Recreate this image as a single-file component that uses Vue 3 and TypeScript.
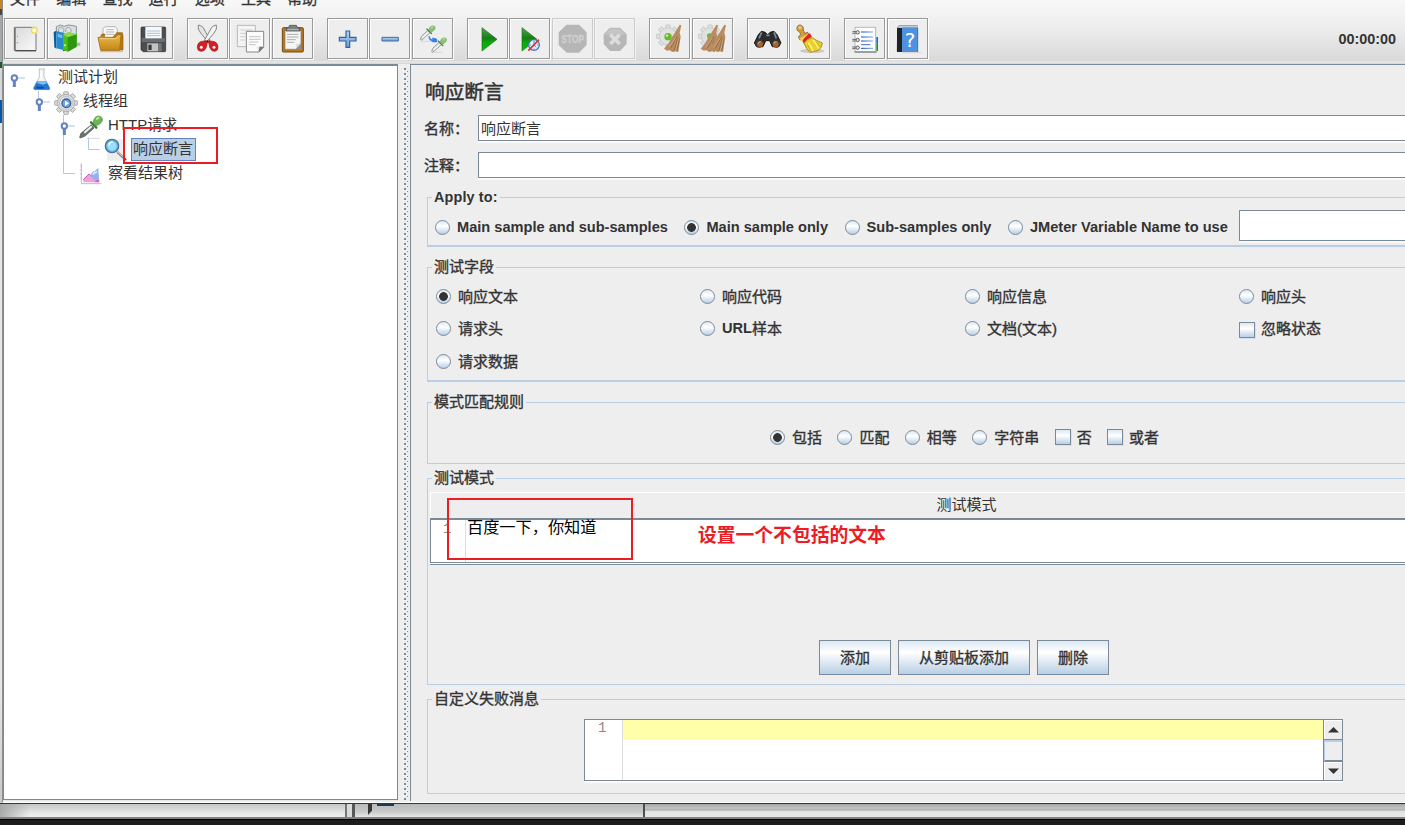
<script setup lang="ts">
interface ToolButton { icon: string; disabled?: boolean }
interface TreeNode { label: string; depth: number; icon: string; handle: boolean; selected?: boolean; latin?: string }
interface Choice { label: string; latin?: string; kind?: 'radio' | 'check'; on?: boolean }

const menus: string[] = ['文件', '编辑', '查找', '运行', '选项', '工具', '帮助']

const toolGroups: ToolButton[][] = [
  [{ icon: 'new' }, { icon: 'templates' }, { icon: 'open' }, { icon: 'save' }],
  [{ icon: 'cut' }, { icon: 'copy' }, { icon: 'paste' }],
  [{ icon: 'plus' }, { icon: 'minus' }, { icon: 'toggle' }],
  [{ icon: 'start' }, { icon: 'startNoTimers' }, { icon: 'stop', disabled: true }, { icon: 'shutdown', disabled: true }],
  [{ icon: 'clear' }, { icon: 'clearAll' }],
  [{ icon: 'search' }, { icon: 'searchReset' }],
  [{ icon: 'functions' }, { icon: 'help' }],
]

const gear = (cx: number, cy: number, r: number, fill: string, stroke: string): string => {
  let teeth = ''
  for (let a = 0; a < 360; a += 45) {
    teeth += `<rect x="${cx - r * 0.2}" y="${cy - r}" width="${r * 0.4}" height="${r * 0.5}" rx="2" fill="${fill}" stroke="${stroke}" stroke-width="2.4" transform="rotate(${a} ${cx} ${cy})"/>`
  }
  return `${teeth}<circle cx="${cx}" cy="${cy}" r="${r * 0.76}" fill="${fill}" stroke="${stroke}" stroke-width="2"/>`
}

const sweeper = (dx: number): string =>
  `<path d="M${92 + dx} 20l5 2-5 22 3 12-7 46-10-2-8 2-8-5-8 1-9-6q16-16 24-36l4-4z" fill="#b98d62"/><path d="M${84 + dx} 56l-20 36M${87 + dx} 60l-12 40M${91 + dx} 60l-7 40" stroke="#8c6540" stroke-width="2.5" fill="none"/><path d="M${80 + dx} 60l-20 28M${89 + dx} 60l-9 38" stroke="#d9b48a" stroke-width="2" fill="none"/>`

const dropper = (x: number, y: number, s: number): string =>
  `<g transform="translate(${x} ${y}) scale(${s})"><path d="M3 62L8 48 36 22l10 10L20 56 6 66z" fill="#dfe4e1" stroke="#8f9794" stroke-width="4"/><path d="M12 56L36 32" stroke="#fff" stroke-width="4"/><path d="M32 16l20 20" stroke="#4f8745" stroke-width="6" stroke-linecap="round"/><path d="M40 20Q44 4 56 2q16 0 12 14-6 10-18 14z" fill="#8cc274" stroke="#6aa259" stroke-width="2"/><path d="M50 12q4-6 10-5" stroke="#cfeabf" stroke-width="4" fill="none"/></g>`

const icons: Record<string, string> = {
  new: `<path d="M31 28h65v70H31z" fill="url(#paper)" stroke="#777" stroke-width="3"/><path d="M34 98h62" stroke="#4d4d4d" stroke-width="4"/><path d="M33 30v66" stroke="#666" stroke-width="4"/><circle cx="40" cy="55" r="1.8" fill="#888"/><circle cx="40" cy="74" r="1.8" fill="#888"/><circle cx="91" cy="37" r="11" fill="#fff29a" opacity=".7"/><circle cx="91" cy="37" r="8.5" fill="#fffde6" stroke="#f0da4e" stroke-width="4"/>`,
  templates: `<path d="M28 44V26l12-5 12 4 12-4 24 4v30z" fill="#dce0e2" stroke="#8b9296" stroke-width="3"/><path d="M34 42q0-18 10-14t5 16M56 42q0-18 10-14t5 16" fill="none" stroke="#9aa" stroke-width="3"/><path d="M20 42l8-4v54l-6-4z" fill="#0d5b93"/><path d="M28 39l24 6v52l-24-6z" fill="#2589cb"/><path d="M32 47l14 4v10l-14-4z" fill="#6fb9e8"/><path d="M80 74h20v9H82z" fill="#adb2ad"/><path d="M48 58l14-6v45l-14 3z" fill="#1f7c0c"/><path d="M48 50l16-7 25 6v37l-27 15-14-6z" fill="#4ebd18"/><path d="M62 58l27-9v37l-27 15z" fill="#2f970d"/><path d="M48 50l16-7 25 6-27 9z" fill="#89df4a"/><circle cx="54" cy="82" r="3" fill="#d9f7b0"/>`,
  open: `<path d="M42 58V31l8-5h29l6 8v26z" fill="#fafafa" stroke="#aaa" stroke-width="2.5"/><path d="M52 35h22M50 42h26M50 49h26" stroke="#b5b5b5" stroke-width="3"/><path d="M34 56l5-8h8v8M82 44h18l2 10v42H36" fill="#b77a12" stroke="#945e0a" stroke-width="2"/><path d="M27 58h52l8-8h9l-4 47H35z" fill="url(#folder)" stroke="#a56d0d" stroke-width="2.5"/><path d="M32 62h48l8-8" fill="none" stroke="#f9d98a" stroke-width="2.5"/><path d="M34 101h68" stroke="#bbb" stroke-width="3"/>`,
  save: `<path d="M27 30q0-3 3-3h68q3 0 3 3v68q0 3-3 3H33l-6-6z" fill="#4b4d50" stroke="#292b2d" stroke-width="2"/><path d="M29 60h70v12H29z" fill="#6a6c70"/><path d="M40 27h49v34H40z" fill="#f6f9fc"/><path d="M45 39h39M45 46h39M45 53h39" stroke="#9db9d6" stroke-width="2.6"/><path d="M46 76h33v24H46z" fill="#c2c4c4"/><path d="M79 76h10v24H79z" fill="#77797c"/><path d="M49 80h10v16H49z" fill="#3a3b3d"/>`,
  cut: `<path d="M34 21q-4 12 7 24l23 28 5-7-21-38q-6-6-14-7z" fill="#e4e6e4" stroke="#858885" stroke-width="3"/><path d="M88 21q4 12-7 24L58 73l-5-7 21-38q6-6 14-7z" fill="#f2f3f2" stroke="#858885" stroke-width="3"/><path d="M57 68l-16 3q-10 4-10 16 0 12 10 13 17 0 19-23l3-4 3 4q2 23 18 23 10-3 9-14-2-13-11-15l-17-3" fill="#d41f25" stroke="#a50d14" stroke-width="2"/><circle cx="43" cy="88" r="4.500" fill="#eee"/><circle cx="81" cy="88" r="4.500" fill="#eee"/><circle cx="61" cy="70" r="3" fill="#651014"/>`,
  copy: `<path d="M25 22h54v64H25z" fill="#f4f4f4" stroke="#b9b9b9" stroke-width="3"/><path d="M34 36h36M34 46h20M34 56h14M34 66h14" stroke="#ccc" stroke-width="3"/><path d="M52 40h52v46L90 102H52z" fill="#fbfbfb" stroke="#858885" stroke-width="3"/><path d="M60 56h35M60 64h35M60 72h28M60 80h20" stroke="#c3c5c3" stroke-width="3"/><path d="M104 87H90v15z" fill="#777" stroke="#777" stroke-width="2"/><path d="M82 88l10-4-3 15z" fill="#e4e4e4"/>`,
  paste: `<rect x="31" y="29" width="63" height="73" rx="3" fill="#b9771d" stroke="#77480e" stroke-width="3"/><path d="M39 37h48v57H39z" fill="#f5f5f5" stroke="#777" stroke-width="2"/><path d="M45 49h34M45 57h34M45 65h26M45 73h22" stroke="#acacac" stroke-width="3"/><path d="M87 76v18H70z" fill="#8d8f8d"/><path d="M72 78l13-2-13 16z" fill="#ddd"/><path d="M42 39v-7l8-4 3-6h20l3 6 8 4v7z" fill="#7d8080" stroke="#4e5050" stroke-width="2.4"/><path d="M46 35h34" stroke="#bbbebe" stroke-width="3"/>`,
  plus: `<path d="M57 39h11v19h19v11H68v19H57V69H37V58h20z" fill="url(#blue)" stroke="#2f63a5" stroke-width="3.6"/>`,
  minus: `<path d="M39 58h49v11H39z" fill="url(#blue)" stroke="#3b6dab" stroke-width="3"/>`,
  toggle: `<path d="M26 70h40M58 103h32" stroke="#d7d7d7" stroke-width="3"/>${dropper(23, 22, 0.68)}${dropper(57, 58, 0.68)}<path d="M51 54q4 14 14 10l-4-4 13 3v9l-13-1 3-3q-13 3-13-14z" fill="#2d83ef" stroke="#1e71dc" stroke-width="2"/>`,
  start: `<path d="M45 29L90 64 45 99z" fill="url(#play)" stroke="#1b761b" stroke-width="2"/>`,
  startNoTimers: `<path d="M39 29L84 64 39 99z" fill="url(#play)" stroke="#1b761b" stroke-width="2"/><circle cx="75" cy="81" r="16" fill="#e8f1fa" stroke="#4a78b4" stroke-width="4"/><path d="M75 68v4M75 91v4M62 81h4M84 81h4M75 81V71M75 81l7 7" stroke="#4a78b4" stroke-width="2.5"/><path d="M58 98l32-33" stroke="#e32f35" stroke-width="5"/>`,
  stop: `<path d="M44 20h37l23 23v38l-23 23H44L20 81V43z" fill="#b6b6b6"/><text x="62" y="75" text-anchor="middle" font-family="Liberation Sans" font-weight="700" font-size="33" textLength="68" lengthAdjust="spacingAndGlyphs" fill="#cfcfcf" stroke="#cfcfcf" stroke-width="1">STOP</text>`,
  shutdown: `<path d="M48 29h30l20 20v29L78 99H48L29 78V49z" fill="#b7b7b7"/><path d="M32 50L49 32h28l18 18" fill="#c5c5c5"/><path d="M49 50l28 28M77 50L49 78" stroke="#dcdcdc" stroke-width="11"/><circle cx="63" cy="64" r="8" fill="#dcdcdc"/>`,
  clear: `${gear(57, 55, 34, '#e0e2e2', '#bfc2c2')}<circle cx="57" cy="56" r="11" fill="#65ba2b"/><circle cx="54" cy="53" r="4" fill="#b8e98c"/>${sweeper(0)}`,
  clearAll: `${gear(54, 55, 34, '#e0e2e2', '#bfc2c2')}<circle cx="53" cy="54" r="8" fill="#65ba2b"/>${sweeper(-19)}${sweeper(5)}`,
  search: `<path d="M34 50l9-10 12 3 7 8 7-8 12-3 9 10 12 25-9 11H76L68 68H56l-8 18H29l-7-11z" fill="#2a2c2e" stroke="#171819" stroke-width="3"/><path d="M44 43l-8 18M81 43l7 18M58 52h10" stroke="#84898c" stroke-width="5"/><circle cx="37" cy="76" r="13" fill="#333537"/><circle cx="88" cy="76" r="13" fill="#333537"/><circle cx="39" cy="78" r="9" fill="#a7642f"/><circle cx="86" cy="78" r="9" fill="#a7642f"/><path d="M34 77q1-6 7-6M81 77q1-6 7-6" stroke="#dda573" stroke-width="3" fill="none"/>`,
  searchReset: `<ellipse cx="70" cy="99" rx="37" ry="6" fill="#c9c9c9"/><path d="M24 34q-2-13 10-13 11 3 9 15l4 10 9-3 5 9-28 14-5-9 7-8-4-8q-6-1-7-7z" fill="#cf9c42" stroke="#8c6220" stroke-width="2.4"/><circle cx="33" cy="29" r="5" fill="#f0c878"/><path d="M31 61l26-12 9 15-24 11z" fill="#f0d04e"/><path d="M41 69q4-11 22-23l6 11q-15 4-24 20z" fill="#df1e26"/><path d="M45 75q8-11 25-16 12 9 30 16 0 12-11 22l-26 6q-12-9-18-28z" fill="#ead02c" stroke="#a58713" stroke-width="2.6"/><path d="M58 74q10 13 14 26M72 66q10 10 17 26" stroke="#fff07c" stroke-width="5" fill="none"/><path d="M55 80l12 20M80 70l14 16" stroke="#b89818" stroke-width="2" fill="none"/>`,
  functions: `<path d="M33 28h62v74H33z" fill="#fdfdfd" stroke="#a5a7a9" stroke-width="2.4"/><path d="M97 57h5v20h-5z" fill="#1e62d8"/><path d="M97 77h5v22h-5z" fill="#1b8f31"/><path d="M32 102h66" stroke="#66696b" stroke-width="3"/><path d="M51 42h36M51 57h36M51 69h36M51 91h36" stroke="url(#ink)" stroke-width="3"/><path d="M51 80h28" stroke="#1c52c9" stroke-width="2.5"/><g fill="#eee" stroke="#555" stroke-width="3"><circle cx="41" cy="43" r="5"/><circle cx="41" cy="66" r="5"/><circle cx="41" cy="89" r="5"/></g><path d="M25 41h12M25 64h12M25 87h12M25 46h10M25 69h10M25 92h10" stroke="#666" stroke-width="3"/>`,
  help: `<path d="M31 28l6-7h55v8l-5 73H33l-4-2z" fill="#8f979e"/><path d="M37 23h54v7H34z" fill="#c5ccd4"/><path d="M30 30h15v72H30z" fill="#202326"/><path d="M45 28h47v74H45z" fill="#4e91df"/><path d="M92 30v72" stroke="#3971b7" stroke-width="3"/><text x="69" y="87" text-anchor="middle" font-family="DejaVu Sans" font-size="60" fill="#fff">?</text><path d="M46 104h58" stroke="#ccc" stroke-width="2"/>`,
}

const treeIcons: Record<string, string> = {
  flask: `<path d="M29 6h18M31 6v24L14 62q-2 6 4 6h41q5 0 3-6L45 30V6" fill="#f2f4f6" stroke="#b8bdc2" stroke-width="2.6"/><path d="M24 43h28l10 19q2 6-3 6H18q-6 0-4-6z" fill="#2377d2"/><path d="M26 43h25l3 6-12 4-18-5z" fill="#7ec0f4"/><path d="M36 10v28" stroke="#fff" stroke-width="4"/><path d="M22 62h22" stroke="#0c4ca4" stroke-width="6"/>`,
  gear: `${gear(36, 36, 34, '#dcdcdc', '#9b9b9b')}<circle cx="36" cy="36" r="19" fill="#f3f3f3" stroke="#a5a5a5" stroke-width="2"/><circle cx="37" cy="37" r="15" fill="#315e9f"/><circle cx="37" cy="37" r="11" fill="#7ba5d8"/><path d="M33 29l12 8-12 8z" fill="#fff"/>`,
  dropper: `<path d="M24 70h38" stroke="#d8d8d8" stroke-width="3"/><g transform="translate(0 1)"><path d="M2 66l4-12 30-25 9 9-27 24-14 6z" fill="#6c7572" stroke="#4a524f" stroke-width="2.4"/><path d="M16 52l22-19" stroke="#eef2f0" stroke-width="6"/><path d="M36 21l16 16" stroke="#3c7b3a" stroke-width="7" stroke-linecap="round"/><path d="M42 22Q46 2 58 2q14 1 12 15-6 11-18 14z" fill="#6db457" stroke="#4b9440" stroke-width="2"/><path d="M52 13q3-6 9-5" stroke="#c5e8b4" stroke-width="5" fill="none"/></g>`,
  magnifier: `<path d="M9 4h52v64H9z" fill="#eee"/><path d="M40 42l26 24" stroke="#555" stroke-width="7"/><path d="M38 39l22 20" stroke="#ccc" stroke-width="4"/><circle cx="24" cy="24" r="20" fill="#65b7e9" stroke="#4e7196" stroke-width="4"/><circle cx="24" cy="24" r="14" fill="#9bddfa"/><path d="M14 23q2-11 12-11" stroke="#e7faff" stroke-width="5" fill="none"/>`,
  chart: `<path d="M7 4v61h60" fill="none" stroke="#b6a7bd" stroke-width="2.5"/><path d="M3 12h4M3 24h4M3 36h4M3 48h4" stroke="#b6a7bd" stroke-width="2"/><path d="M13 61V53l17-17 12 10 18-8v23z" fill="#eba1da"/><path d="M13 53l17-17 12 10" fill="none" stroke="#cf5bb6" stroke-width="3"/><path d="M35 40q4-12 13-14l10-8 2 38q-8 4-14-3-7-3-11-13z" fill="#8fb4ee"/><path d="M42 38q4-8 12-9" stroke="#d8e8ff" stroke-width="6" fill="none"/><path d="M48 59q6-8 13-5v7H45z" fill="#d964bb"/>`,
}

const tree: TreeNode[] = [
  { label: '测试计划', depth: 0, icon: 'flask', handle: true },
  { label: '线程组', depth: 1, icon: 'gear', handle: true },
  { label: '请求', latin: 'HTTP', depth: 2, icon: 'dropper', handle: true },
  { label: '响应断言', depth: 3, icon: 'magnifier', handle: false, selected: true },
  { label: '察看结果树', depth: 2, icon: 'chart', handle: false },
]

const applyTo: Choice[] = [
  { label: '', latin: 'Main sample and sub-samples' },
  { label: '', latin: 'Main sample only', on: true },
  { label: '', latin: 'Sub-samples only' },
  { label: '', latin: 'JMeter Variable Name to use' },
]

const fields: Choice[] = [
  { label: '响应文本', on: true }, { label: '响应代码' }, { label: '响应信息' }, { label: '响应头' },
  { label: '请求头' }, { label: '样本', latin: 'URL' }, { label: '文档(文本)' }, { label: '忽略状态', kind: 'check' },
  { label: '请求数据' },
]

const rules: Choice[] = [
  { label: '包括', on: true }, { label: '匹配' }, { label: '相等' }, { label: '字符串' },
  { label: '否', kind: 'check' }, { label: '或者', kind: 'check' },
]

const actions: string[] = ['添加', '从剪贴板添加', '删除']
</script>

<template>
  <div class="screen">
    <svg class="defs" width="0" height="0" aria-hidden="true">
      <defs>
        <linearGradient id="paper" x1="0" y1="0" x2="1" y2="1"><stop offset="0" stop-color="#d9d9d9" /><stop offset="1" stop-color="#fafafa" /></linearGradient>
        <linearGradient id="folder" x1="0" y1="0" x2="0" y2="1"><stop offset="0" stop-color="#e9b94d" /><stop offset="1" stop-color="#c48618" /></linearGradient>
        <linearGradient id="blue" x1="0" y1="0" x2="0" y2="1"><stop offset="0" stop-color="#b7d0ec" /><stop offset="1" stop-color="#6e9dd0" /></linearGradient>
        <linearGradient id="play" x1="0" y1="0" x2="0" y2="1"><stop offset="0" stop-color="#51a751" /><stop offset=".45" stop-color="#157b15" /><stop offset=".6" stop-color="#0aa50a" /><stop offset="1" stop-color="#12b812" /></linearGradient>
        <linearGradient id="ink" gradientUnits="userSpaceOnUse" x1="50" y1="0" x2="88" y2="0"><stop offset="0" stop-color="#0c3fc0" /><stop offset="1" stop-color="#7fb2ef" /></linearGradient>
      </defs>
    </svg>
    <div class="upper">
      <div class="edge"></div>
      <main class="window">
        <header class="top">
          <nav class="menu"><span v-for="m in menus" :key="m">{{ m }}</span></nav>
          <div class="toolbar">
            <div v-for="(group, g) in toolGroups" :key="g" class="tool-group">
              <button v-for="t in group" :key="t.icon" class="tool" :class="{ off: t.disabled }">
                <svg viewBox="0 0 123 123" v-html="icons[t.icon]"></svg>
              </button>
            </div>
            <span class="timer">00:00:00</span>
          </div>
        </header>
        <div class="work">
          <aside class="tree">
            <svg class="links" width="120" height="130" viewBox="0 0 120 130"><path d="M34.5 25v8M59.500 49v58.500H71M84.500 71.500v12H95.500" /></svg>
            <div v-for="n in tree" :key="n.label" class="node" :class="'d' + n.depth">
              <svg class="handle" viewBox="0 0 75 72"><g v-if="n.handle"><path d="M40 39h23" stroke="#a9c3df" stroke-width="3" /><path d="M31 45v21" stroke="#6382bf" stroke-width="9" /><circle cx="31" cy="39" r="8" fill="#fff" stroke="#6382bf" stroke-width="6" /></g></svg>
              <svg class="node-icon" viewBox="0 0 72 72" v-html="treeIcons[n.icon]"></svg>
              <span class="node-label" :class="{ selected: n.selected }"><i v-if="n.latin">{{ n.latin }}</i>{{ n.label }}</span>
            </div>
            <div class="mark tree-mark"></div>
          </aside>
          <div class="divider"><svg width="6" height="732"><defs><pattern id="bumps" width="6" height="5" patternUnits="userSpaceOnUse"><rect width="2" height="2" x="1" y="0" fill="#7a8a99" /><rect width="1" height="1" x="4" y="3" fill="#7a8a99" /><rect width="1" height="1" x="0" y="2" fill="#fff" /><rect width="1" height="1" x="3" y="2" fill="#fff" /></pattern></defs><rect width="6" height="732" fill="url(#bumps)" /></svg></div>
          <section class="panel">
            <h1>响应断言</h1>
            <div class="line"><label>名称：</label><div class="input">响应断言</div></div>
            <div class="line second"><label>注释：</label><div class="input"></div></div>

            <div class="group apply">
              <div class="legend latin">Apply to:</div>
              <div class="row">
                <span v-for="c in applyTo" :key="c.latin" class="choice"><b class="radio" :class="{ on: c.on }"></b><em>{{ c.latin }}</em></span>
                <div class="input variable"></div>
              </div>
            </div>

            <div class="group fields">
              <div class="legend">测试字段</div>
              <div class="grid">
                <span v-for="c in fields" :key="c.label" class="choice"><b :class="[c.kind || 'radio', { on: c.on }]"></b><em v-if="c.latin">{{ c.latin }}</em>{{ c.label }}</span>
              </div>
            </div>

            <div class="group rules">
              <div class="legend">模式匹配规则</div>
              <div class="row">
                <span v-for="c in rules" :key="c.label" class="choice"><b :class="[c.kind || 'radio', { on: c.on }]"></b>{{ c.label }}</span>
              </div>
            </div>

            <div class="group patterns">
              <div class="legend">测试模式</div>
              <div class="table">
                <div class="th">测试模式</div>
                <div class="cell"><span class="gutter">1</span><span class="value">百度一下，你知道</span></div>
                <div class="mark cell-mark"></div>
                <div class="note">设置一个不包括的文本</div>
              </div>
              <div class="actions"><button v-for="a in actions" :key="a">{{ a }}</button></div>
            </div>

            <div class="group message">
              <div class="legend">自定义失败消息</div>
              <div class="editor">
                <span class="gutter">1</span>
                <div class="code"><div class="current"></div></div>
                <div class="scroll">
                  <div class="arrow"><svg width="11" height="6"><path d="M0 5.500L5.500 0 11 5.500z" /></svg></div>
                  <div class="thumb"></div>
                  <div class="arrow"><svg width="11" height="6"><path d="M0 .5L5.500 6 11 .5z" /></svg></div>
                </div>
              </div>
            </div>
          </section>
        </div>
      </main>
    </div>
    <div class="behind">
      <div class="b-left"></div>
      <div class="b-split"></div>
      <div class="b-mid"><i></i><u></u></div>
      <div class="b-right"></div>
    </div>
    <div class="taskbar"></div>
  </div>
</template>

<style>
html, body { margin: 0; overflow: hidden; background: #1c1c1c; }
</style>

<style scoped>
* { box-sizing: border-box; }
.screen { width: 1405px; height: 825px; overflow: hidden; display: flex; flex-direction: column; font-family: "Liberation Sans", "Noto Sans CJK SC", sans-serif; font-size: 15px; color: #333; }
.defs { position: absolute; }
.upper { height: 803px; display: flex; }
.edge { width: 2px; background: linear-gradient(#c9861e 0 9px, #44484a 9px 15px, #a4a8aa 15px 62px, #1c5a28 62px 68px, #d6d8d8 68px 100px, #0b57a5 100px 123px, #e4e7e6 123px 690px, #c6c9c8); flex: none; }
.window { width: 1403px; height: 803px; border-bottom: 1px solid #fff; background: #eee; display: flex; flex-direction: column; overflow: hidden; border-left: 1px solid #8b8d8f; }
.top { height: 64px; flex: none; background: linear-gradient(#f8f8f8, #ececec 30px, #d9d9d9 61px, #f0f0f0 62px, #d8d8d8 63px); overflow: hidden; }
.menu { display: flex; gap: 16.2px; margin-left: 7px; height: 18px; }
.menu span { line-height: 18px; margin-top: -10px; height: 18px; width: 30px; -webkit-text-stroke: .3px #333; white-space: nowrap; }
.toolbar { display: flex; gap: 13.8px; padding-left: 1px; height: 42px; }
.tool-group { display: flex; gap: 1.6px; }
.tool { width: 41px; height: 41px; padding: 0; background: #eee; border: 1px solid #999; box-shadow: inset 1px 1px #fff, 1px 1px #fff; flex: none; }
.tool svg { display: block; width: 41px; height: 41px; margin: -1px; }
.tool.off { border-color: #ccc; box-shadow: inset 1px 1px #f5f5f5, 1px 1px #f2f2f2; }
.timer { margin-left: auto; margin-right: 9px; font-weight: 700; font-size: 14.400px; line-height: 42px; }
.work { display: flex; height: 738px; }
.tree { position: relative; width: 395px; height: 736px; flex: none; background: #fff; border: solid #7a8a99; border-width: 2px 1px 1px 1px; box-shadow: 0 1px #e8e8e8; }
.links { position: absolute; left: 0; top: 0; fill: none; stroke: #b0c8e0; }
.node { height: 23.8px; display: flex; align-items: center; position: relative; top: -1px; }
.d1 { padding-left: 25px; }
.d2 { padding-left: 50px; }
.d3 { padding-left: 75px; }
.handle { width: 25px; height: 24px; flex: none; }
.node-icon { width: 24px; height: 24px; flex: none; margin-top: 4px; }
.node-label { margin: 2px 0 0 3px; padding: 0 1px; border: 1px solid transparent; height: 23px; line-height: 20px; white-space: nowrap; }
.node-label i { font-style: normal; }
.node-label.selected { background: #b8cfe5; border-color: #6382bf; width: 65px; }
.mark { position: absolute; border: 2px solid #ed1c24; }
.tree-mark { left: 119px; top: 61px; width: 95px; height: 37px; }
.divider { width: 12px; flex: none; padding: 4px 0 0 5px; }
.divider svg { display: block; }
.panel { width: 996px; border: solid #7a8a99; border-width: 1px 0 0 1px; flex: none; padding-left: 15px; height: 737px; }
h1 { font-size: 19.700px; font-weight: 400; line-height: 26px; margin: 14px 0 10px -1px; height: 26px; -webkit-text-stroke: .5px #333; }
.line { display: flex; height: 25px; -webkit-text-stroke: .35px #333; }
.line.second { margin-top: 12px; }
.line label { width: 52px; line-height: 27px; margin-left: -2px; margin-right: 2px; white-space: nowrap; flex: none; }
.input { height: 26px; width: 950px; flex: none; background: #fff; border: 1px solid #7a8a99; box-shadow: 0 2px #fafafa; line-height: 25px; padding-left: 2px; -webkit-text-stroke: 0; }
.line .input { margin-left: 0; }
.group { margin-left: 1px; border: 1px solid #b8cfe5; border-right: 0; position: relative; }
.legend { width: fit-content; background: #eee; height: 20px; line-height: 20px; margin: -11px 0 0 4px; padding: 0 2px 0 2px; -webkit-text-stroke: .35px #333; white-space: nowrap; }
.legend.latin { font-weight: 700; font-size: 14.400px; -webkit-text-stroke: 0; letter-spacing: .15px; }
.choice { display: flex; align-items: center; white-space: nowrap; height: 20px; -webkit-text-stroke: .35px #333; }
.choice em { font-style: normal; font-weight: 700; font-size: 14.600px; -webkit-text-stroke: 0; }
.radio { width: 15px; height: 15px; border-radius: 50%; border: 1.400px solid #7a8a99; background: linear-gradient(#dce7f2, #fff 40%, #b8cfe5); margin: 2px 7px 0 0; flex: none; }
.radio.on { background: radial-gradient(circle, #333 0 4px, transparent 4.700px), linear-gradient(#dce7f2, #fff 40%, #b8cfe5); }
.check { width: 16px; height: 16px; border: 1px solid #7a8a99; background: linear-gradient(#dce7f2, #fff 40%, #b8cfe5); box-shadow: 1px 1px #d5e2ef; margin: 2px 6px 0 0; flex: none; }
.apply { height: 50px; margin-top: 20px; border-bottom-width: 2px; }
.apply .row { display: flex; padding: 6px 0 0 7px; height: 34px; align-items: center; }
.apply .choice { margin-right: 16.500px; }
.apply .radio { margin-top: 0; }
.variable { height: 31px; margin: 0 0 4px -5.400px; width: 300px; }
.fields { height: 115px; margin-top: 20px; border-bottom-width: 2px; }
.fields .check { margin-top: 4px; }
.grid { display: grid; grid-template-columns: 264px 265px 274px 160px; grid-auto-rows: 32.500px; padding: 8px 0 0 8px; }
.rules { height: 62px; margin-top: 20px; }
.rules .row { display: flex; padding: 14px 0 0 342px; }
.rules .choice { margin-right: 15.400px; }
.patterns { height: 207px; margin-top: 14px; }
.table { position: relative; margin: 4px 0 0 2px; height: 73px; }
.th { height: 26px; border-top: 1px solid #fff; border-left: 1px solid #fff; text-align: center; line-height: 24px; width: 1072px; }
.cell { height: 45px; margin-top: 0; border: 1px solid #7a8a99; border-top-width: 2px; background: #fff; display: flex; box-shadow: 0 1px #fff, 0 2px #7a8a99; }
.gutter { width: 35px; border-right: 1px solid #ddd; color: #8f8585; font: 14px/18px "Liberation Mono", monospace; padding-left: 12px; flex: none; }
.value { font-size: 16.200px; line-height: 15px; color: #000; padding-left: 1px; white-space: nowrap; }
.cell-mark { left: 17px; top: 6px; width: 186px; height: 62px; }
.note { position: absolute; left: 268px; top: 30px; font-size: 18.800px; line-height: 28px; font-weight: 700; color: #ed1c24; white-space: nowrap; }
.actions { display: flex; gap: 7px; padding: 75px 0 0 391px; }
.actions button { height: 35px; width: 72px; padding: 0 0 2px; font: inherit; color: #333; -webkit-text-stroke: .35px #333; border: 1px solid #7a8a99; background: linear-gradient(#dde8f3, #fff 35%, #b8cfe5); white-space: nowrap; }
.actions button:nth-child(2) { width: 132px; }
.message { height: 95px; margin-top: 14px; }
.editor { width: 759px; height: 62px; margin: 10px 0 0 156px; background: #fff; border: 1px solid #7a8a99; display: flex; box-shadow: 0 2px #fafafa; }
.editor .gutter { width: 38px; padding-left: 13px; line-height: 17px; }
.code { width: 700px; }
.current { height: 20px; background: #ffffa9; }
.scroll { flex: 1; border-left: 1px solid #7a8a99; display: flex; flex-direction: column; background: #eee; }
.arrow { height: 20px; display: flex; align-items: center; justify-content: center; border-bottom: 1px solid #7a8a99; box-shadow: inset 1px 1px #fff; flex: none; }
.arrow svg { fill: #333; }
.arrow:last-child { border-bottom: 0; height: 18px; }
.thumb { height: 22px; border: solid #b8cfe5; border-width: 2px 0 0 1px; border-bottom: 2px solid #7a8a99; }
.behind { height: 16px; flex: none; display: flex; border-top: 1px solid #333836; border-bottom: 2px solid #7e8284; background: linear-gradient(#a4a6a4, #c0c2c0 30%, #b2b4b2 48%, #e1e3e3 55%, #e7e9e9); }
.b-left { width: 345px; background: linear-gradient(100deg, #a5a8a7, transparent 9%), linear-gradient(#c4c7c6, #e5e8e7 70%, #eef0ef); }
.b-split { width: 10px; border-left: 2px solid #747776; border-right: 3px solid #555857; background: #d9dbda; }
.b-mid { width: 290px; display: flex; background: linear-gradient(#b9bab9, #c8cac9 60%, #e6e8e7); border-right: 2px solid #4b504e; }
.b-mid i { width: 4px; height: 11px; margin-left: 13px; background: #343736; clip-path: polygon(0 0, 100% 0, 100% 60%, 0 100%); }
.b-mid u { width: 17px; height: 2px; margin-left: 5px; background: #1d3a52; }
.b-right { flex: 1; }
.taskbar { height: 6px; background: #1c1c1c; border-top: 1px solid #000; }
</style>
